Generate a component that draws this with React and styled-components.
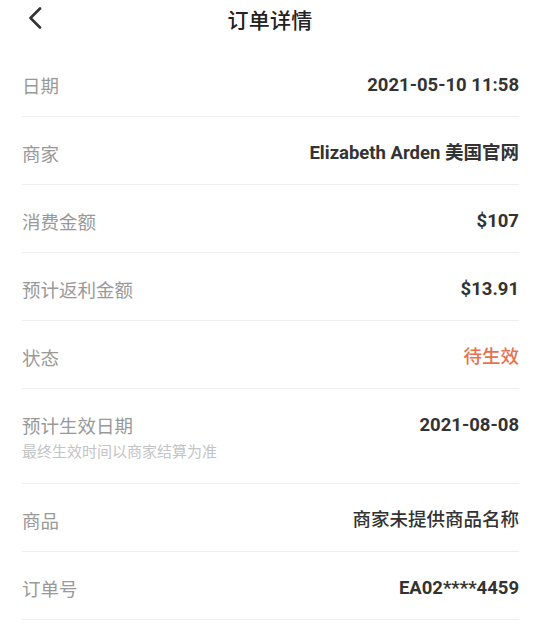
import React from "react";
import styled, { createGlobalStyle } from "styled-components";

const GlobalStyle = createGlobalStyle`
  html, body {
    margin: 0;
    padding: 0;
    background: #ffffff;
  }
  body {
    font-family: Roboto, "Noto Sans CJK SC", sans-serif;
    -webkit-font-smoothing: antialiased;
  }
`;

const Page = styled.div`
  width: 540px;
  background: #ffffff;
`;

const Header = styled.div`
  position: relative;
  height: 37px;
  padding-bottom: 12px;
  display: flex;
  align-items: center;
  justify-content: center;
`;

const BackButton = styled.button`
  position: absolute;
  left: 22px;
  top: 4px;
  width: 26px;
  height: 28px;
  padding: 0;
  border: none;
  background: none;
  display: flex;
  align-items: center;
  justify-content: center;
`;

const Title = styled.div`
  font-family: "Noto Sans CJK SC", sans-serif;
  font-size: 21px;
  font-weight: 500;
  color: #222222;
  letter-spacing: 0.3px;
`;

const List = styled.div`
  padding: 0 21px 0 22px;
`;

const Row = styled.div`
  display: flex;
  align-items: ${(p) => (p.$tall ? "flex-start" : "center")};
  justify-content: space-between;
  height: ${(p) => (p.$tall ? 95 : 68)}px;
  padding-top: ${(p) => (p.$tall ? "23px" : "5px")};
  box-sizing: border-box;
  border-bottom: 1px solid #efefef;
`;

const LabelBox = styled.div`
  display: flex;
  flex-direction: column;
`;

const Label = styled.div`
  font-family: "Noto Sans CJK SC", sans-serif;
  font-size: 18.5px;
  color: #999999;
  line-height: 26px;
`;

const Note = styled.div`
  font-family: "Noto Sans CJK SC", sans-serif;
  font-size: 15px;
  color: #c4c4c4;
  line-height: 22px;
  margin-top: 2px;
`;

const Value = styled.div`
  font-family: Roboto, "Noto Sans CJK SC", sans-serif;
  font-size: 18.5px;
  font-weight: ${(p) => (p.$cjk ? 500 : 700)};
  color: ${(p) => (p.$accent ? "#e5714f" : "#333333")};
  line-height: 26px;
`;

const rows = [
  { label: "日期", value: "2021-05-10 11:58" },
  { label: "商家", value: "Elizabeth Arden 美国官网" },
  { label: "消费金额", value: "$107" },
  { label: "预计返利金额", value: "$13.91" },
  { label: "状态", value: "待生效", accent: true },
  {
    label: "预计生效日期",
    value: "2021-08-08",
    note: "最终生效时间以商家结算为准",
  },
  { label: "商品", value: "商家未提供商品名称", cjk: true },
  { label: "订单号", value: "EA02****4459" },
];

export default function App() {
  return (
    <Page>
      <GlobalStyle />
      <Header>
        <BackButton aria-label="返回">
          <svg width="14" height="22" viewBox="0 0 14 22" fill="none">
            <path
              d="M12 1.5 L2.5 11 L12 20.5"
              stroke="#333333"
              strokeWidth="2.6"
              strokeLinecap="round"
              strokeLinejoin="round"
            />
          </svg>
        </BackButton>
        <Title>订单详情</Title>
      </Header>
      <List>
        {rows.map((r) => (
          <Row key={r.label} $tall={!!r.note}>
            <LabelBox>
              <Label>{r.label}</Label>
              {r.note && <Note>{r.note}</Note>}
            </LabelBox>
            <Value $accent={r.accent} $cjk={r.cjk || r.accent}>
              {r.value}
            </Value>
          </Row>
        ))}
      </List>
    </Page>
  );
}
